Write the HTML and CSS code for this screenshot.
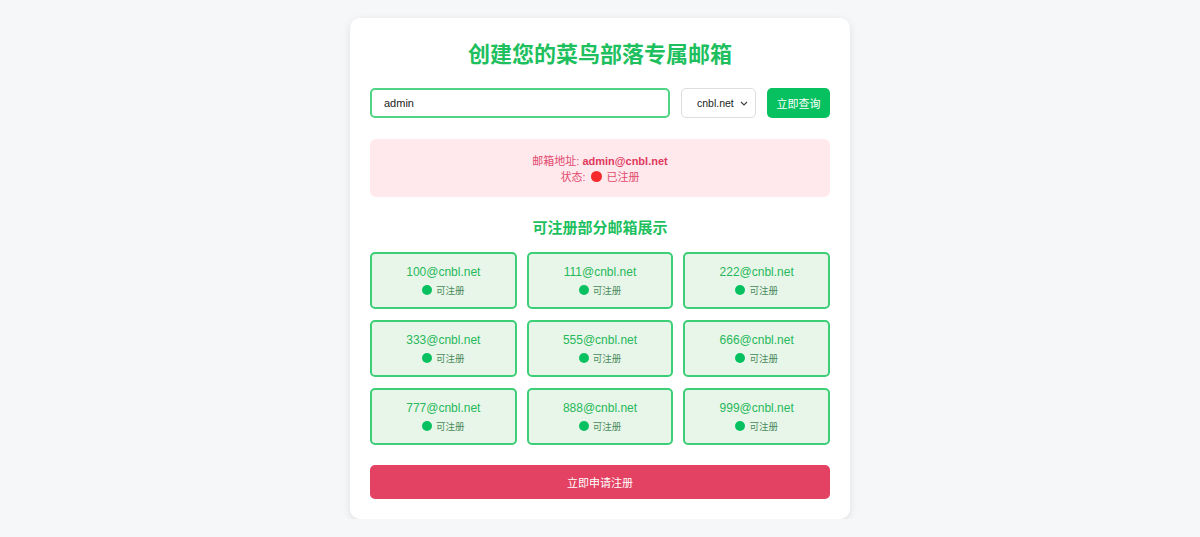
FILE: index.html
```html
<!DOCTYPE html>
<html>
  <head>
    <meta charset="utf-8">
    <title>菜鸟部落邮箱</title>
    <link rel="stylesheet" href="styles.css">
  </head>
  <body>
  <div class="mail-container">
    <h1>创建您的菜鸟部落专属邮箱</h1>
    <form class="search-row">
      <input type="text" class="name-input" value="admin">
      <select class="domain-select">
        <option>cnbl.net</option>
      </select>
      <button type="button" class="search-btn">立即查询</button>
    </form>
    <div class="result-box">
      <div>邮箱地址: <strong>admin@cnbl.net</strong></div>
      <div>状态: <span class="dot dot-red"></span> 已注册</div>
    </div>
    <h2>可注册部分邮箱展示</h2>
    <div class="mail-grid">
      <div class="mail-item"><div class="mail-addr">100@cnbl.net</div><div class="mail-status"><span class="dot"></span>可注册</div></div>
      <div class="mail-item"><div class="mail-addr">111@cnbl.net</div><div class="mail-status"><span class="dot"></span>可注册</div></div>
      <div class="mail-item"><div class="mail-addr">222@cnbl.net</div><div class="mail-status"><span class="dot"></span>可注册</div></div>
      <div class="mail-item"><div class="mail-addr">333@cnbl.net</div><div class="mail-status"><span class="dot"></span>可注册</div></div>
      <div class="mail-item"><div class="mail-addr">555@cnbl.net</div><div class="mail-status"><span class="dot"></span>可注册</div></div>
      <div class="mail-item"><div class="mail-addr">666@cnbl.net</div><div class="mail-status"><span class="dot"></span>可注册</div></div>
      <div class="mail-item"><div class="mail-addr">777@cnbl.net</div><div class="mail-status"><span class="dot"></span>可注册</div></div>
      <div class="mail-item"><div class="mail-addr">888@cnbl.net</div><div class="mail-status"><span class="dot"></span>可注册</div></div>
      <div class="mail-item"><div class="mail-addr">999@cnbl.net</div><div class="mail-status"><span class="dot"></span>可注册</div></div>
    </div>
    <button type="button" class="apply-btn">立即申请注册</button>
  </div>
</body>
</html>
```

FILE: styles.css
```css
body {
  margin: 0;
  background-color: #f6f7f9;
  font-family: "Liberation Sans", "Noto Sans CJK SC", sans-serif;
}

.mail-container {
  width: 460px;
  margin: 18px auto 0;
  padding: 20px;
  background-color: #fff;
  border-radius: 10px;
  box-shadow: 0 2px 8px rgba(0, 0, 0, 0.1);
}

h1 {
  margin: 0;
  padding-top: 2px;
  height: 48px;
  line-height: 30px;
  text-align: center;
  font-size: 22px;
  font-weight: bold;
  color: #1ebf5e;
}

.search-row {
  display: flex;
  gap: 11px;
  height: 30px;
}

.name-input {
  flex: 1;
  box-sizing: border-box;
  height: 30px;
  padding: 0 12px;
  border: 2px solid #4fd384;
  border-radius: 5px;
  font-family: "Liberation Sans", sans-serif;
  font-size: 11px;
  color: #222;
  outline: none;
}

.domain-select {
  -webkit-appearance: none;
  appearance: none;
  width: 75px;
  height: 30px;
  box-sizing: border-box;
  padding: 0 0 0 15px;
  border: 1px solid #ddd;
  border-radius: 5px;
  background: #fff url("data:image/svg+xml,%3Csvg xmlns='http://www.w3.org/2000/svg' width='8' height='5' viewBox='0 0 8 5'%3E%3Cpath d='M1 1l3 3 3-3' fill='none' stroke='%23444' stroke-width='1.2'/%3E%3C/svg%3E") no-repeat right 7px center;
  font-family: "Liberation Sans", sans-serif;
  font-size: 10.5px;
  color: #222;
}

.search-btn {
  width: 63px;
  height: 30px;
  border: none;
  border-radius: 5px;
  background-color: #07c160;
  color: #fff;
  font-family: "Liberation Sans", "Noto Sans CJK SC", sans-serif;
  font-size: 11px;
  cursor: pointer;
}

.result-box {
  margin-top: 21px;
  padding: 14px 0;
  height: 30px;
  background-color: #ffe9ec;
  border-radius: 6px;
  text-align: center;
  color: #e24a6f;
  font-size: 11px;
  line-height: 16px;
}

.result-box strong {
  color: #e0395e;
}

.dot {
  display: inline-block;
  width: 10px;
  height: 10px;
  border-radius: 50%;
  background-color: #07c160;
  vertical-align: -1px;
  margin-right: 4px;
}

.dot-red {
  width: 11px;
  height: 11px;
  background-color: #f52a2a;
  margin: 0 2px;
}

h2 {
  margin: 21px 0 14px;
  text-align: center;
  font-size: 15px;
  line-height: 20px;
  font-weight: bold;
  color: #1ebf5e;
}

.mail-grid {
  display: grid;
  grid-template-columns: repeat(3, 1fr);
  gap: 11px 10px;
}

.mail-item {
  height: 53px;
  border: 2px solid #3dcf77;
  border-radius: 5px;
  background-color: #e8f6e9;
  text-align: center;
}

.mail-addr {
  margin-top: 10px;
  font-size: 12px;
  line-height: 16px;
  color: #26b85a;
}

.mail-status {
  margin-top: 5px;
  font-size: 9.5px;
  line-height: 12px;
  color: #4a8a5a;
}

.apply-btn {
  display: block;
  width: 100%;
  height: 34px;
  margin-top: 20px;
  border: none;
  border-radius: 5px;
  background-color: #e34262;
  color: #fff;
  font-family: "Liberation Sans", "Noto Sans CJK SC", sans-serif;
  font-size: 11px;
  cursor: pointer;
}
```
